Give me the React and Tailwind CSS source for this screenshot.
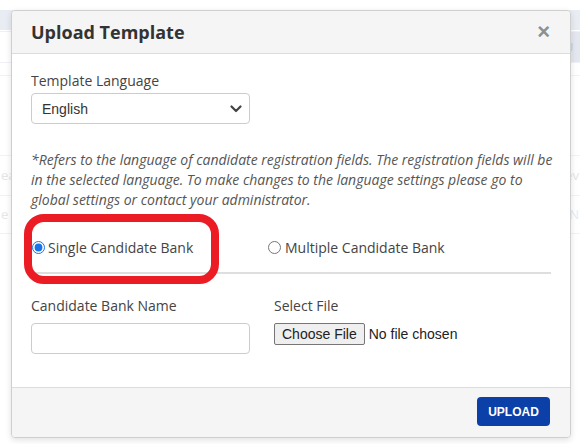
import React from 'react';

function Chevron() {
    return (
        <svg width="12" height="8" viewBox="0 0 12 8" className="pointer-events-none absolute right-[8px] top-[12px]">
            <path d="M1.5 1.5 L6 6 L10.5 1.5" fill="none" stroke="#444" strokeWidth="2.2" strokeLinecap="round" strokeLinejoin="round" />
        </svg>
    );
}

function BackgroundPage() {
    // faint page behind the modal
    return (
        <div className="absolute inset-0 bg-white">
            <div className="h-[10px]" />
            <div className="h-[20px] bg-[#e9ecf3]" />
            <div className="h-[2px] border-b border-[#eef0f4]" />
            <div className="flex h-[31px] border-b border-[#f0f1f4]">
                <div className="flex-1" />
                <div className="w-[20px] bg-[#e4e7f0] text-[13px] text-[#c9ccd6] pl-[4px] pt-[6px]">U</div>
            </div>
            <div className="h-[13px] border-b border-[#f1f2f5]" />
            <div className="h-[80px] border-b border-[#f3f3f5]" />
            <div className="flex h-[40px] items-center justify-between border-b border-[#f1f2f5] pl-[1px] pr-[1px] text-[13px] text-[#e4e4e8]">
                <span>ea</span>
                <span>ev</span>
            </div>
            <div className="flex h-[38px] items-center justify-between border-b border-[#f1f2f5] pl-[1px] pr-[1px] text-[13px] text-[#e6e6ea]">
                <span>e N</span>
                <span className="text-[#e3ecf7]">N</span>
            </div>
        </div>
    );
}

export default function App() {
    return (
        <div className="relative h-[444px] w-[580px] overflow-hidden" style={{ fontFamily: '"Open Sans", "Noto Sans", sans-serif' }}>
            <BackgroundPage />

            <div className="absolute left-[11px] top-[10px] flex h-[428px] w-[560px] flex-col overflow-hidden rounded-[4px] border border-[#cfcfcf] bg-white shadow-[0_2px_6px_rgba(0,0,0,0.12)]">
                {/* Header */}
                <div className="flex h-[43px] shrink-0 items-center justify-between border-b border-[#dcdcdc] bg-[#f5f5f5] pl-[19px] pr-[20px]">
                    <h2 className="text-[18px] font-bold text-[#333]">Upload Template</h2>
                    <span className="text-[22px] font-bold leading-none text-[#8f8f8f]" style={{ fontFamily: '"Liberation Sans", Arial, sans-serif' }}>×</span>
                </div>

                {/* Body */}
                <div className="flex-1 pl-[19px] pr-[19px]">
                    <div className="mt-[17px] h-[20px] text-[14px] leading-[20px] text-[#444]">Template Language</div>
                    <div className="relative mt-[2px] h-[31px] w-[219px]">
                        <select
                            defaultValue="English"
                            className="h-full w-full appearance-none rounded-[4px] border border-[#cccccc] bg-white pl-[10px] pt-[1px] text-[14px] text-[#333] outline-none"
                            style={{ fontFamily: '"Liberation Sans", Arial, sans-serif' }}
                        >
                            <option>English</option>
                        </select>
                        <Chevron />
                    </div>

                    <p className="mt-[26px] w-[526px] text-[14px] italic leading-[20px] text-[#555]">
                        *Refers to the language of candidate registration fields. The registration fields will be in the selected language. To make changes to the language settings please go to global settings or contact your administrator.
                    </p>

                    <div className="mt-[27px] grid h-[20px] grid-cols-[237px_1fr] items-center text-[14px] text-[#444]">
                        <label className="flex items-center">
                            <input type="radio" name="bank" defaultChecked className="ml-[1px] mr-[3px] h-[13px] w-[13px] accent-[#1a73e8]" />
                            <span>Single Candidate Bank</span>
                        </label>
                        <label className="flex items-center">
                            <input type="radio" name="bank" className="mr-[4px] h-[13px] w-[13px]" />
                            <span>Multiple Candidate Bank</span>
                        </label>
                    </div>

                    <div className="mt-[15px] h-[2px] w-[520px] bg-[#dedede]" />

                    <div className="mt-[22px] grid grid-cols-[243px_1fr] text-[14px] text-[#444]">
                        <div>
                            <div className="h-[20px] leading-[20px]">Candidate Bank Name</div>
                            <input type="text" className="mt-[7px] h-[31px] w-[219px] rounded-[4px] border border-[#cccccc] bg-white outline-none" />
                        </div>
                        <div>
                            <div className="h-[20px] leading-[20px]">Select File</div>
                            <div className="mt-[7px] flex items-center gap-[4px] text-[14px] text-[#222]" style={{ fontFamily: '"Liberation Sans", Arial, sans-serif' }}>
                                <span className="flex h-[22px] items-center rounded-[2px] border border-[#767676] bg-[#efefef] px-[7px]">Choose File</span>
                                <span>No file chosen</span>
                            </div>
                        </div>
                    </div>
                </div>

                {/* Footer */}
                <div className="flex h-[50px] shrink-0 justify-end border-t border-[#dcdcdc] bg-[#f5f5f5] pr-[20px] pt-[9px]">
                    <button
                        className="h-[29px] w-[73px] rounded-[4px] bg-[#0b40a8] text-[12px] font-bold text-white"
                        style={{ fontFamily: '"Liberation Sans", Arial, sans-serif' }}
                    >
                        UPLOAD
                    </button>
                </div>
            </div>

            {/* red annotation ring */}
            <div className="pointer-events-none absolute left-[24px] top-[214px] h-[70px] w-[195px] rounded-[20px] border-[8px] border-[#ec1c24]" />
        </div>
    );
}
